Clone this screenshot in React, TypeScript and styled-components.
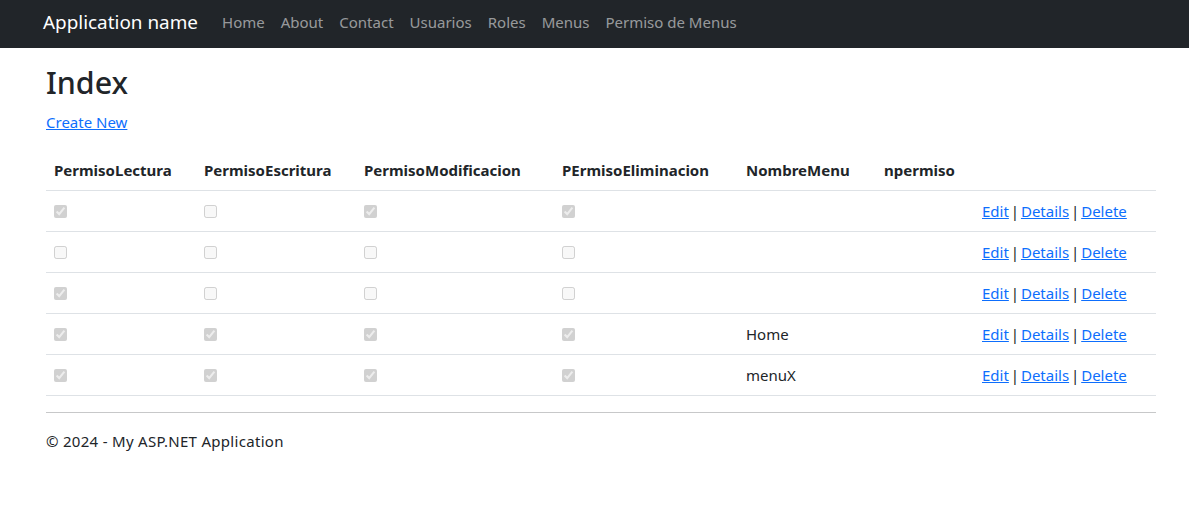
import React from "react";
import styled, { createGlobalStyle } from "styled-components";

const Global = createGlobalStyle`
  html, body { margin: 0; padding: 0; background: #fff; }
  body {
    font-family: "Noto Sans", "Open Sans", sans-serif;
    font-size: 15px;
    line-height: 24px;
    color: #212529;
  }
  * { box-sizing: border-box; }
`;

const NavBar = styled.nav`
  height: 48px;
  background: #212529;
  display: flex;
  align-items: center;
  padding: 0 0 5px 43px;
  margin-bottom: 16px;
`;

const Brand = styled.a`
  font-size: 18.9px;
  line-height: 30px;
  color: #fff;
  text-decoration: none;
  margin-right: 16px;
  white-space: nowrap;
`;

const NavList = styled.div`
  display: flex;
  align-items: center;
`;

const NavLink = styled.a`
  color: rgba(255, 255, 255, 0.55);
  text-decoration: none;
  padding: 0 8px;
  white-space: nowrap;
`;

const Main = styled.main`
  padding: 0 33px 0 46px;
`;

const Title = styled.h2`
  margin: 0 0 8px;
  font-size: 30.4px;
  font-weight: 500;
  line-height: 38px;
`;

const Para = styled.p`
  margin: 0 0 16px;
`;

const Link = styled.a`
  color: #0d6efd;
  text-decoration: underline;
`;

const Table = styled.table`
  width: 100%;
  border-collapse: collapse;
  margin-bottom: 16px;
`;

const Th = styled.th<{ $w: number }>`
  width: ${(p) => p.$w}px;
  text-align: left;
  font-weight: 700;
  padding: 8px;
  border-bottom: 1px solid #dee2e6;
  white-space: nowrap;
`;

const Td = styled.td`
  padding: 8px;
  border-bottom: 1px solid #dee2e6;
  vertical-align: middle;
  white-space: nowrap;
  height: 41px;
`;

const ActionTd = styled(Td)`
  word-spacing: -2px;
`;

const Check = styled.input`
  margin: 0;
  width: 13px;
  height: 13px;
  vertical-align: -1px;
`;

const Sep = styled.span`
  color: #212529;
`;

const Rule = styled.hr`
  margin: 16px 0;
  border: 0;
  border-top: 1px solid #212529;
  opacity: 0.25;
`;

const Footer = styled.footer`
  p {
    margin: 0 0 16px;
    letter-spacing: 0.3px;
  }
`;

type Row = { l: boolean; e: boolean; m: boolean; d: boolean; menu: string };

const rows: Row[] = [
  { l: true, e: false, m: true, d: true, menu: "" },
  { l: false, e: false, m: false, d: false, menu: "" },
  { l: true, e: false, m: false, d: false, menu: "" },
  { l: true, e: true, m: true, d: true, menu: "Home" },
  { l: true, e: true, m: true, d: true, menu: "menuX" },
];

const Box = ({ on }: { on: boolean }) => (
  <Check type="checkbox" disabled checked={on} readOnly />
);

export default function App() {
  return (
    <>
      <Global />
      <NavBar>
        <Brand href="#">Application name</Brand>
        <NavList>
          {["Home", "About", "Contact", "Usuarios", "Roles", "Menus", "Permiso de Menus"].map((t) => (
            <NavLink key={t} href="#">{t}</NavLink>
          ))}
        </NavList>
      </NavBar>
      <Main>
        <Title>Index</Title>
        <Para>
          <Link href="#">Create New</Link>
        </Para>
        <Table>
          <thead>
            <tr>
              <Th $w={150}>PermisoLectura</Th>
              <Th $w={160}>PermisoEscritura</Th>
              <Th $w={198}>PermisoModificacion</Th>
              <Th $w={184}>PErmisoEliminacion</Th>
              <Th $w={138}>NombreMenu</Th>
              <Th $w={98}>npermiso</Th>
              <Th $w={182}></Th>
            </tr>
          </thead>
          <tbody>
            {rows.map((r, i) => (
              <tr key={i}>
                <Td><Box on={r.l} /></Td>
                <Td><Box on={r.e} /></Td>
                <Td><Box on={r.m} /></Td>
                <Td><Box on={r.d} /></Td>
                <Td>{r.menu}</Td>
                <Td></Td>
                <ActionTd>
                  <Link href="#">Edit</Link> <Sep>|</Sep> <Link href="#">Details</Link> <Sep>|</Sep>{" "}
                  <Link href="#">Delete</Link>
                </ActionTd>
              </tr>
            ))}
          </tbody>
        </Table>
        <Rule />
        <Footer>
          <p>© 2024 - My ASP.NET Application</p>
        </Footer>
      </Main>
    </>
  );
}
